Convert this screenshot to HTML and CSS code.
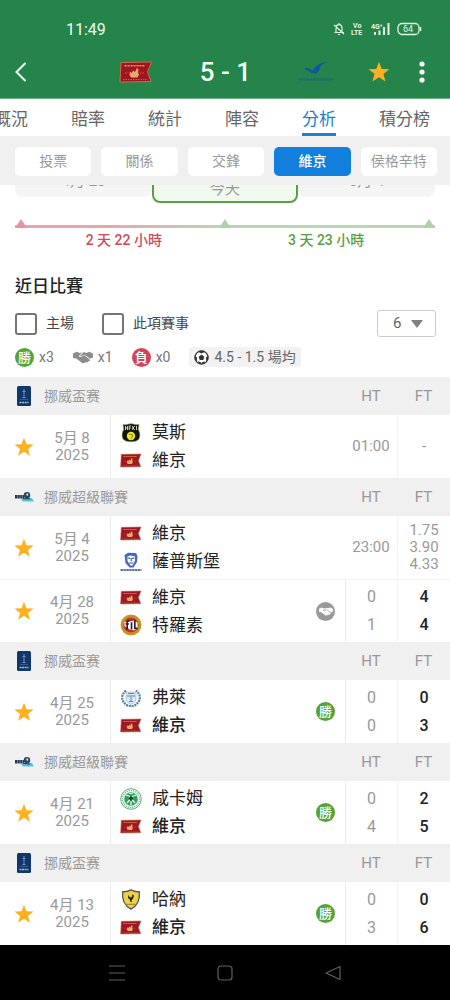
FILE: index.html
```html
<!DOCTYPE html>
<html lang="zh-Hant">
<head>
<meta charset="utf-8">
<meta name="viewport" content="width=device-width, initial-scale=1">
<title>賽事分析</title>
<link rel="stylesheet" href="styles.css">
</head>
<body>
<svg class="sprite" aria-hidden="true">
  <symbol id="star" viewBox="0 0 24 24"><path fill="#ffb020" d="M12 .8l3 7.900 8.400.4-6.600 5.200 2.300 8.100L12 17.800l-7.100 4.600 2.300-8.100L.6 9.100 9 8.700z"/></symbol>
  <symbol id="viking" viewBox="0 0 34 22">
    <path fill="#9d1620" stroke="#c9704a" stroke-width="1" d="M2 1.500L32.500 1l-4 10 3.500 9.500L1 21z"/>
    <path stroke="#dc9a62" stroke-width="1.400" stroke-dasharray="2 1" d="M5.500 4.800h21"/>
    <path stroke="#c9704a" stroke-width=".8" stroke-dasharray="1.500 1" d="M4 18.500h24M6 12h3.500M21 12h4"/>
    <path fill="#eba76c" d="M11 10.500l2 1.500 1-2.500 2 1.500 2-4 1.500 1.500-.5 3 1 2-1.500 3h-6.500L10.500 14z"/>
  </symbol>
  <symbol id="cup" viewBox="0 0 14 20">
    <rect width="14" height="20" rx="1.500" fill="#10376c"/>
    <path stroke="#7792b5" stroke-width="1" fill="none" d="M7 3v8M5.500 5.500h3M5.500 11.500h3"/>
    <path stroke="#a7b9cf" stroke-width="1.400" stroke-dasharray="2 .6" d="M2.500 16.500h9"/>
    <path stroke="#5575a0" stroke-width=".6" d="M3 13.500h8"/>
  </symbol>
  <symbol id="elite" viewBox="0 0 20 12">
    <path fill="#56c1dc" d="M7 8.200c3-2 6-1 11-1.200l2 3.500H9z"/>
    <path stroke="#26384f" stroke-width="3.400" stroke-dasharray="2.200 .4" d="M1 5.800h9"/>
    <circle cx="13" cy="4.200" r="3.200" fill="#2b4560"/>
    <path fill="#dfe8ee" d="M12 3l1.500-.7L14.500 4l-1.500 1z"/>
    <path stroke="#26384f" d="M9 7.500l7 .5"/>
  </symbol>
  <symbol id="hands" viewBox="0 0 22 14">
    <path d="M0 2.500L4 .8 7.500 2l3-.8-4 4c.5 1.800 2.500 1.800 4.500 0l1.500-.6 6 5c.6 1-.6 2-1.600 1.200.2 1.200-1.200 1.800-2 1-.2 1-1.600 1.400-2.300.6L11 13.600 3.500 8 0 7.500z"/>
    <path d="M22 2.500L18 .8 14.500 2 12 1 7.700 5c.5 1 2 .7 3.300-.6l1.700-.5 6 4.600L22 7z"/>
  </symbol>
  <symbol id="ball" viewBox="0 0 16 16">
    <circle cx="8" cy="8" r="7" fill="#fff" stroke="#333" stroke-width="1.400"/>
    <path fill="#333" d="M8 4.900l3 2.200-1.100 3.500H6.100L5 7.100zM4.200 1.800L8 3.600l3.800-1.800L8 .6zM.8 6.200L3.300 8l-.4 4L.8 9.800zM15.200 6.200L12.700 8l.4 4 2.100-2.200zM4.300 12.200l2.900.6.800 2.400-3-.7zM11.700 12.200l-2.900.6-.8 2.400 3-.7z"/>
  </symbol>
  <symbol id="moss" viewBox="0 0 20 20">
    <path fill="#11150f" stroke="#8b914c" stroke-width=".6" d="M2 1.500c3 1 5-.8 8-.8s5 1.800 8 .8l-.8 5c2 3 2.300 7.500.3 10-3 3-12 3-15 0-2-2.500-1.700-7 .3-10z"/>
    <path fill="none" stroke="#e0e1d0" stroke-width=".9" d="M4.500 3v4M6.500 3v4M4.500 5h2M8.200 7V3h2M8.200 5h1.600M11.700 3v4M14 3l-2 2 2 2M15.500 3v4"/>
    <circle cx="10" cy="13" r="4.200" fill="#ece829"/><path fill="none" stroke="#66701c" stroke-width=".8" d="M8 11l4 1-2 4"/>
  </symbol>
  <symbol id="sarpsborg" viewBox="0 0 22 20">
    <path fill="#4768c0" d="M4.500 3L8 .8 16 1l1.500 3-.5 6-3.500 5.500h-4L5.500 11z"/>
    <path fill="#fff" d="M7.500 4.500l3-1 4.500 1v4l-2.500 5h-2L7.500 9z"/>
    <path stroke="#3559b8" stroke-width="1.100" fill="none" d="M8 6l2.200.4M12 6.400L14.500 6M11.200 6v3.200M9.200 11h4"/>
    <path stroke="#5e75b4" stroke-width="1.800" stroke-dasharray="2.500 .4" d="M.5 18h21"/>
  </symbol>
  <symbol id="tromso" viewBox="0 0 20 20">
    <circle cx="10" cy="10" r="9.500" fill="#c79d28"/><circle cx="10" cy="10" r="8" fill="none" stroke="#a98226" stroke-width=".8" stroke-dasharray="1.300 1"/>
    <circle cx="10" cy="10" r="6.900" fill="#d0262c"/><path fill="#fff" d="M4 7h3l6-1 3 2v5l-3 2-4-1-5-3z"/>
    <path stroke="#242431" stroke-width="1.500" fill="none" d="M6.500 14V7l2-1M5 9h3M10.500 7.500V14M13.500 5.500V13h2.500"/>
  </symbol>
  <symbol id="floey" viewBox="0 0 20 20">
    <path fill="none" stroke="#4e80a3" stroke-width="2.200" stroke-dasharray="2 .8" d="M5 2.500C-.5 7-.5 14 7.500 18h5C20.500 14 20.500 7 15 2.500"/>
    <path fill="#dce8f1" stroke="#8aaac1" stroke-width=".6" d="M5 4h10v7c0 3-3 4.500-5 5.500-2-1-5-2.500-5-5.500z"/>
    <path stroke="#5988aa" stroke-width="1" d="M6 8h8M10 9v5M8 13.500h4M7 5.500h6"/>
  </symbol>
  <symbol id="hamkam" viewBox="0 0 22 22">
    <circle cx="11" cy="11" r="10.300" fill="#fff" stroke="#3a9b61" stroke-width=".8"/>
    <circle cx="11" cy="11" r="8.500" fill="none" stroke="#7bbd95" stroke-width="1.400" stroke-dasharray="1.400 .8"/>
    <circle cx="11" cy="11" r="6.800" fill="#2fa05a"/>
    <path stroke="#fff" stroke-width="1.200" fill="none" d="M6 7l4 1.500M16 7l-4 1.500M7 15l3-3.500M15 15l-3-3.500M11 13v4M9 5.500h4"/>
    <path fill="#104a2a" d="M11 8l2.500 2.500L11 13l-2.500-2.500z"/>
  </symbol>
  <symbol id="hana" viewBox="0 0 20 22">
    <path fill="#f0d23e" stroke="#55585a" stroke-width="1.400" d="M10 1C7.500 2.400 4 3 1.300 2.800c-.8 7 .3 14 8.700 18.200 8.400-4.200 9.500-11.200 8.700-18.200C16 3 12.500 2.400 10 1z"/>
    <path fill="#22252a" d="M7 6l2 3 2-1 .5-2.500 1.500 1-.5 3-2 2.500.5 1.500H9.500L9 11.500 7 9.500z"/>
    <path stroke="#55585a" stroke-width="1" stroke-dasharray="1.500 .6" d="M6 16h8"/>
  </symbol>
</svg>

<header class="top">
  <div class="status">
    <span class="clock">11:49</span>
    <div class="status-icons">
      <svg width="12" height="14" viewBox="0 0 12 14" fill="none" stroke="#e4f5e6" stroke-width="1.200"><path d="M1.500 10.500h9.500M3 10V6c0-4.500 6-4.500 6 0v4M6 1v1.200M5 12.500h2M1 3l10 9"/></svg>
      <svg width="14" height="16" viewBox="0 0 14 16" fill="#e4f5e6"><text x="2" y="7" class="tiny">Vo</text><text x="0" y="14" class="tiny">LTE</text></svg>
      <svg width="20" height="14" viewBox="0 0 20 14" fill="#e4f5e6"><text x="0" y="7" class="tiny">4G⁺</text><path d="M3 10h2v3H3zM7.500 8.500h2V13h-2zM12 5h2v8h-2zM16.500 1h2v12h-2z"/></svg>
      <svg width="25" height="14" viewBox="0 0 25 14" fill="none" stroke="#e4f5e6"><rect x="1" y="1.500" width="21" height="11" rx="4" stroke-width="1.300"/><path d="M23.500 5v4" stroke-width="1.500"/><text x="6" y="10" class="level">64</text></svg>
    </div>
  </div>
  <div class="match-bar">
    <button class="icon-btn" aria-label="返回"><svg width="12" height="20" viewBox="0 0 12 20" fill="none" stroke="#effff0" stroke-width="2"><path d="M10.500 1L1.500 10l9 9"/></svg></button>
    <div class="score-line">
      <svg width="34" height="22" role="img" aria-label="維京"><use href="#viking"/></svg>
      <strong class="score">5 - 1</strong>
      <svg width="36" height="22" viewBox="0 0 36 22" role="img" aria-label="侯格辛特"><path fill="#0d5a9d" d="M6 7.500c4-1.500 6 .8 9 2 2-4 5-7.500 14-8.500-4 1.500-6 3-7 5.500-1 3.500-2 6-5.500 6-3 0-4.500-2-6.500-3z"/><path stroke="#176b86" stroke-width="1.800" stroke-dasharray="3 .5" d="M1 18.500h34"/></svg>
    </div>
    <button class="icon-btn" aria-label="收藏"><svg width="22" height="22"><use href="#star"/></svg></button>
    <button class="icon-btn more" aria-label="更多"><svg width="6" height="22" viewBox="0 0 6 22" fill="#fff"><circle cx="3" cy="3" r="2.600"/><circle cx="3" cy="11" r="2.600"/><circle cx="3" cy="19" r="2.600"/></svg></button>
  </div>
</header>

<nav class="tabs">
  <a href="#overview">概況</a><a href="#odds">賠率</a><a href="#stats">統計</a><a href="#lineup">陣容</a><a href="#analysis" class="active">分析</a><a href="#table">積分榜</a>
</nav>
<div class="chips">
  <button>投票</button><button>關係</button><button>交鋒</button><button class="on">維京</button><button>侯格辛特</button>
</div>

<main>
  <section class="rest">
    <div class="days"><span class="day">4月 28</span><span class="today">今天</span><span class="day">5月 4</span></div>
    <div class="track">
      <svg width="12" height="9" viewBox="0 0 12 9"><path fill="#e8949f" d="M6 0l6 9H0z"/></svg>
      <svg width="12" height="9" viewBox="0 0 12 9"><path fill="#b2d1aa" d="M6 0l6 9H0z"/></svg>
      <svg width="12" height="9" viewBox="0 0 12 9"><path fill="#b2d1aa" d="M6 0l6 9H0z"/></svg>
    </div>
    <div class="spans"><span class="red">2 天 22 小時</span><span class="green">3 天 23 小時</span></div>
  </section>

  <section class="recent">
    <h2>近日比賽</h2>
    <div class="filters">
      <label><input type="checkbox">主場</label>
      <label><input type="checkbox">此項賽事</label>
      <div class="count">
        <select aria-label="比賽場數"><option>6</option><option>10</option></select>
        <svg width="12" height="8" viewBox="0 0 12 8"><path fill="#808080" d="M0 0h12L6 8z"/></svg>
      </div>
    </div>
    <div class="legend">
      <span class="item"><b class="badge">勝</b>x3</span>
      <span class="item"><svg width="20" height="13" fill="#8c8c8c"><use href="#hands"/></svg>x1</span>
      <span class="item"><b class="badge loss">負</b>x0</span>
      <span class="item avg"><svg width="15" height="15"><use href="#ball"/></svg>4.5 - 1.5 場均</span>
    </div>
  </section>

  <table>
    <colgroup><col class="c-star"><col class="c-date"><col><col class="c-result"><col class="c-ht"><col class="c-ft"></colgroup>
    <tbody>
      <tr class="league"><th colspan="4"><div class="league-name"><svg width="20" height="20"><use href="#cup"/></svg>挪威盃赛</div></th><th>HT</th><th>FT</th></tr>
      <tr class="match">
        <td><button class="icon-btn fav" aria-label="收藏"><svg width="20" height="20"><use href="#star"/></svg></button></td>
        <td class="date">5月 8<br>2025</td>
        <td class="teams"><div><svg width="22" height="20"><use href="#moss"/></svg>莫斯</div><div><svg width="22" height="15"><use href="#viking"/></svg>維京</div></td>
        <td></td><td class="pending">01:00</td><td class="odds">-</td>
      </tr>
    </tbody>
    <tbody>
      <tr class="league"><th colspan="4"><div class="league-name"><svg width="20" height="12"><use href="#elite"/></svg>挪威超級聯賽</div></th><th>HT</th><th>FT</th></tr>
      <tr class="match">
        <td><button class="icon-btn fav" aria-label="收藏"><svg width="20" height="20"><use href="#star"/></svg></button></td>
        <td class="date">5月 4<br>2025</td>
        <td class="teams"><div><svg width="22" height="15"><use href="#viking"/></svg>維京</div><div><svg width="22" height="20"><use href="#sarpsborg"/></svg>薩普斯堡</div></td>
        <td></td><td class="pending">23:00</td><td class="odds">1.75<br>3.90<br>4.33</td>
      </tr>
      <tr class="match">
        <td><button class="icon-btn fav" aria-label="收藏"><svg width="20" height="20"><use href="#star"/></svg></button></td>
        <td class="date">4月 28<br>2025</td>
        <td class="teams"><div><svg width="22" height="15"><use href="#viking"/></svg>維京</div><div><svg width="22" height="22"><use href="#tromso"/></svg>特羅素</div></td>
        <td><span class="badge draw"><svg width="14" height="9" viewBox="0 0 22 14" fill="#fff"><use href="#hands" width="22" height="14"/></svg></span></td><td class="ht">0<br>1</td><td class="ft">4<br>4</td>
      </tr>
    </tbody>
    <tbody>
      <tr class="league"><th colspan="4"><div class="league-name"><svg width="20" height="20"><use href="#cup"/></svg>挪威盃赛</div></th><th>HT</th><th>FT</th></tr>
      <tr class="match">
        <td><button class="icon-btn fav" aria-label="收藏"><svg width="20" height="20"><use href="#star"/></svg></button></td>
        <td class="date">4月 25<br>2025</td>
        <td class="teams"><div><svg width="22" height="20"><use href="#floey"/></svg>弗萊</div><div class="won"><svg width="22" height="15"><use href="#viking"/></svg>維京</div></td>
        <td><b class="badge">勝</b></td><td class="ht">0<br>0</td><td class="ft">0<br>3</td>
      </tr>
    </tbody>
    <tbody>
      <tr class="league"><th colspan="4"><div class="league-name"><svg width="20" height="12"><use href="#elite"/></svg>挪威超級聯賽</div></th><th>HT</th><th>FT</th></tr>
      <tr class="match">
        <td><button class="icon-btn fav" aria-label="收藏"><svg width="20" height="20"><use href="#star"/></svg></button></td>
        <td class="date">4月 21<br>2025</td>
        <td class="teams"><div><svg width="22" height="22"><use href="#hamkam"/></svg>咸卡姆</div><div class="won"><svg width="22" height="15"><use href="#viking"/></svg>維京</div></td>
        <td><b class="badge">勝</b></td><td class="ht">0<br>4</td><td class="ft">2<br>5</td>
      </tr>
    </tbody>
    <tbody>
      <tr class="league"><th colspan="4"><div class="league-name"><svg width="20" height="20"><use href="#cup"/></svg>挪威盃赛</div></th><th>HT</th><th>FT</th></tr>
      <tr class="match">
        <td><button class="icon-btn fav" aria-label="收藏"><svg width="20" height="20"><use href="#star"/></svg></button></td>
        <td class="date">4月 13<br>2025</td>
        <td class="teams"><div><svg width="22" height="21"><use href="#hana"/></svg>哈納</div><div class="won"><svg width="22" height="15"><use href="#viking"/></svg>維京</div></td>
        <td><b class="badge">勝</b></td><td class="ht">0<br>3</td><td class="ft">0<br>6</td>
      </tr>
    </tbody>
  </table>
</main>

<footer class="sysnav">
  <button class="icon-btn" aria-label="最近"><svg width="16" height="16" viewBox="0 0 16 16" stroke="#606060" stroke-width="1.200"><path d="M0 1h16M0 8h16M0 15h16"/></svg></button>
  <button class="icon-btn" aria-label="主畫面"><svg width="16" height="16" viewBox="0 0 16 16" fill="none" stroke="#606060" stroke-width="1.200"><rect x="1" y="1" width="14" height="14" rx="3"/></svg></button>
  <button class="icon-btn" aria-label="返回上一頁"><svg width="16" height="16" viewBox="0 0 16 16" fill="none" stroke="#606060" stroke-width="1.200" stroke-linejoin="round"><path d="M15 1.500v13L1 8z"/></svg></button>
</footer>
</body>
</html>
```

FILE: styles.css
```css
* { box-sizing: border-box; }
body {
  margin: 0;
  height: 100vh;
  display: flex;
  flex-direction: column;
  background: #fff;
  color: #757575;
  font: 15px/17px Roboto, "Noto Sans CJK TC", sans-serif;
}
svg { display: block; flex: none; }
.sprite { position: absolute; width: 0; height: 0; }
button, select, input { font: inherit; color: inherit; margin: 0; }
.icon-btn { display: block; padding: 0; border: 0; background: none; }

.top { flex: none; background: #24844a; color: #effff0; border-bottom: 1px solid #6db089; }
.status { height: 46px; padding: 12px 28px 0 66px; display: flex; justify-content: space-between; align-items: center; }
.clock { font-size: 16px; }
.status-icons { display: flex; align-items: center; gap: 6px; }
.tiny { font-size: 7px; font-weight: 700; }
.level { font-size: 9px; fill: #e4f5e6; stroke: none; }
.match-bar { height: 52px; padding: 0 25px 0 15px; display: flex; align-items: center; }
.score-line { flex: 1; margin: 0 34px 0 92px; display: flex; align-items: center; justify-content: space-between; }
.score { font-size: 26px; line-height: 30px; font-weight: 500; white-space: nowrap; }
.more { margin-left: 29px; }

.tabs { flex: none; height: 37px; margin-left: -6px; display: flex; gap: 43px; overflow: hidden; }
.tabs a { flex: none; font-size: 17px; line-height: 40px; color: #666; text-decoration: none; }
.tabs .active { color: #2080d0; box-shadow: inset 0 -3px #2080d0; }
.chips { flex: none; height: 49px; padding: 11px 13px 9px 15px; background: #f0f0f0; display: flex; gap: 10px; }
.chips button { flex: 1 1 0; min-width: 0; padding: 0; border: 0; border-radius: 5px; background: #fff; color: #999; font-size: 14px; white-space: nowrap; }
.chips .on { background: #1180dc; color: #fff; font-weight: 500; }

main { flex: 1; min-height: 0; overflow: hidden auto; scrollbar-width: none; }
.rest { padding: 0 15px; margin-top: -20px; }
.days { height: 38px; display: flex; align-items: flex-start; color: #999; text-align: center; }
.day { flex: 1; line-height: 32px; background: #f5f5f5; border-radius: 0 0 8px 8px; }
.today { width: 146px; height: 38px; padding-top: 14px; border: 2px solid #58a042; border-radius: 8px; background: #f2faef; }
.track { margin-top: 16px; height: 9px; display: flex; justify-content: space-between; background: linear-gradient(90deg, #eba3ad 20%, #bcd6b5 50%) bottom / 100% 3px no-repeat; }
.spans { margin-top: 4px; display: flex; justify-content: center; gap: 126px; font-weight: 500; font-size: 14px; }
.red { color: #d04a5c; }
.green { color: #58a042; }

.recent { padding: 26px 14px 10px 15px; }
h2 { margin: 0; font-size: 17px; line-height: 22px; font-weight: 500; color: #222; }
.filters { margin-top: 13px; height: 27px; display: flex; align-items: center; gap: 28px; color: #444; }
.filters label { display: flex; align-items: center; gap: 9px; font-size: 14px; }
.filters input { appearance: none; width: 22px; height: 22px; border: 2px solid #757575; border-radius: 3px; background: #fff; }
.count { margin-left: auto; position: relative; }
.count select { display: block; appearance: none; width: 59px; height: 27px; padding: 0 15px; border: 1px solid #ccc; border-radius: 3px; background: #fff; color: #666; }
.count svg { position: absolute; right: 13px; top: 10px; pointer-events: none; }
.legend { margin-top: 10px; display: flex; align-items: center; gap: 19px; font-size: 14px; line-height: 20px; }
.item { display: flex; align-items: center; gap: 5px; }
.avg { padding: 0 5px; background: #f2f2f2; border-radius: 3px; color: #666; }
.badge { display: flex; align-items: center; justify-content: center; width: 19px; height: 19px; border-radius: 50%; background: #52a43a; color: #fff; font-size: 13px; line-height: 19px; font-weight: 500; }
.loss { background: #d04557; }
.draw { background: #999; }

table { width: 100%; table-layout: fixed; border-collapse: separate; border-spacing: 0; color: #999; text-align: center; }
th, td { padding: 0; font-weight: 400; }
.c-star { width: 34px; }
.c-date { width: 76px; }
.c-result { width: 39px; }
.c-ht { width: 52px; }
.c-ft { width: 53px; }
.league th { height: 38px; background: #f0f0f0; }
.league-name { display: flex; align-items: center; gap: 10px; padding-left: 14px; font-size: 14px; }
.match td { height: 63px; }
.match + .match td { border-top: 1px solid #f5f5f5; }
.fav { margin-left: 14px; }
.teams { border-left: 1px solid #ececec; color: #222; font-size: 17px; text-align: left; }
.teams div { height: 28px; display: flex; align-items: center; gap: 10px; padding-left: 9px; }
.won { font-weight: 500; }
.match .badge { margin: 0 auto; }
.ht, .ft { font-size: 16px; line-height: 28px; }
.ht { border-left: 1px solid #ececec; }
.ft, .odds { border-left: 1px solid #f3f3f3; }
.match .ft { color: #222; font-weight: 500; }

.sysnav { flex: none; height: 55px; background: #000; display: flex; align-items: center; justify-content: center; gap: 92px; }
```
